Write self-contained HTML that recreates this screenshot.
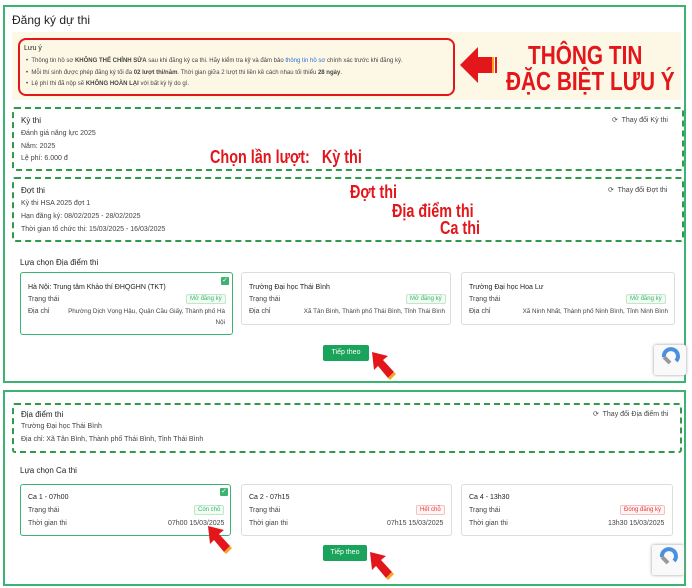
<!DOCTYPE html>
<html><head><meta charset="utf-8"><style>
*{box-sizing:border-box;margin:0;padding:0}
body{width:692px;height:588px;background:#fff;font-family:"Liberation Sans",sans-serif;position:relative;overflow:hidden;color:#333}
.a{position:absolute}
.panel{position:absolute;border:2px solid #3cb371;background:#fff}
.dash{position:absolute;border:2px dashed #2e9a4a;border-radius:3px}
.s{font-size:7px;color:#444;position:absolute;white-space:nowrap}
.h{font-size:8px;color:#222;position:absolute;white-space:nowrap}
.red{position:absolute;color:#e3161b;font-weight:bold;white-space:nowrap;transform-origin:0 0}
.card{position:absolute;border:1px solid #ddd;border-radius:3px;background:#fff}
.card.sel{border:1.5px solid #3cb371}
.badge{position:absolute;font-size:6px;border:1px solid;border-radius:2px;padding:1px 3px;white-space:nowrap}
.g{color:#3cb371;border-color:#bfe8c9;background:#f3fbf4}
.r{color:#e33;border-color:#f5c0c0;background:#fff5f5}
.btn{position:absolute;background:#1aa35a;color:#fff;font-size:7px;border-radius:2px;text-align:center}
.chk{position:absolute;width:8px;height:8px;background:#3cb371;border-radius:1px;color:#fff;font-size:7px;line-height:8px;text-align:center}
.cap{position:absolute;width:32px;height:30px;background:#f9f9f9;box-shadow:0 0 3px #999;border-radius:2px}
.addr{position:absolute;font-size:6.3px;color:#444;text-align:right;line-height:11px}
</style></head><body>

<div class="panel" style="left:3px;top:5px;width:683px;height:378px"></div>
<div class="a" style="left:12px;top:13px;font-size:12px;color:#222">Đăng ký dự thi</div>
<div class="a" style="left:12px;top:32px;width:669px;height:68px;background:#fdf8e6"></div>
<div class="a" style="left:18px;top:38px;width:437px;height:58px;border:2px solid #e3161b;border-radius:8px"></div>
<div class="h" style="left:24px;top:45px;font-size:7px">Lưu ý</div>
<div class="s" style="left:26px;top:58px;font-size:6px">•&nbsp; Thông tin hồ sơ <b>KHÔNG THỂ CHỈNH SỬA</b> sau khi đăng ký ca thi. Hãy kiểm tra kỹ và đảm bảo <span style="color:#2a6fd6">thông tin hồ sơ</span> chính xác trước khi đăng ký.</div>
<div class="s" style="left:26px;top:70px;font-size:6px">•&nbsp; Mỗi thí sinh được phép đăng ký tối đa <b>02 lượt thi/năm</b>. Thời gian giữa 2 lượt thi liền kề cách nhau tối thiểu <b>28 ngày</b>.</div>
<div class="s" style="left:26px;top:81px;font-size:6px">•&nbsp; Lệ phí thi đã nộp sẽ <b>KHÔNG HOÀN LẠI</b> với bất kỳ lý do gì.</div>
<svg class="a" style="left:458px;top:44px" width="40" height="42" viewBox="0 0 40 42"><path d="M2 21 L20 3 L20 13 L34 13 L34 29 L20 29 L20 39 Z" fill="#e3161b"/><rect x="34" y="13" width="2" height="16" fill="#f5a623"/><rect x="37" y="13" width="2" height="16" fill="#e3161b"/></svg>
<div class="red" style="left:528px;top:40px;font-size:26px;transform:scaleX(0.8)">THÔNG TIN</div>
<div class="red" style="left:506px;top:66px;font-size:26px;transform:scaleX(0.8)">ĐẶC BIỆT LƯU Ý</div>

<div class="dash" style="left:12px;top:107px;width:672px;height:64px"></div>
<div class="h" style="left:21px;top:116px">Kỳ thi</div>
<div class="s" style="left:21px;top:130px">Đánh giá năng lực 2025</div>
<div class="s" style="left:21px;top:143px">Năm: 2025</div>
<div class="s" style="left:21px;top:155px">Lệ phí: 6.000 đ</div>
<div class="s" style="left:612px;top:116px">⟳&nbsp; Thay đổi Kỳ thi</div>
<div class="red" style="left:210px;top:147px;font-size:18px;transform:scaleX(0.8)">Chọn lần lượt:&nbsp;&nbsp; Kỳ thi</div>

<div class="dash" style="left:12px;top:177px;width:672px;height:65px"></div>
<div class="h" style="left:21px;top:186px">Đợt thi</div>
<div class="s" style="left:21px;top:200px">Kỳ thi HSA 2025 đợt 1</div>
<div class="s" style="left:21px;top:213px">Hạn đăng ký: 08/02/2025 - 28/02/2025</div>
<div class="s" style="left:21px;top:226px">Thời gian tổ chức thi: 15/03/2025 - 16/03/2025</div>
<div class="s" style="left:608px;top:186px">⟳&nbsp; Thay đổi Đợt thi</div>
<div class="red" style="left:350px;top:182px;font-size:18px;transform:scaleX(0.8)">Đợt thi</div>
<div class="red" style="left:392px;top:201px;font-size:18px;transform:scaleX(0.8)">Địa điểm thi</div>
<div class="red" style="left:440px;top:218px;font-size:18px;transform:scaleX(0.8)">Ca thi</div>

<div class="h" style="left:20px;top:258px">Lựa chọn Địa điểm thi</div>
<div class="card sel" style="left:20px;top:272px;width:213px;height:63px"></div>
<div class="chk" style="left:221px;top:277px">✓</div>
<div class="h" style="left:28px;top:284px;font-size:7px">Hà Nội: Trung tâm Khảo thí ĐHQGHN (TKT)</div>
<div class="s" style="left:28px;top:296px">Trạng thái</div><div class="badge g" style="left:186px;top:294px">Mở đăng ký</div>
<div class="s" style="left:28px;top:308px">Địa chỉ</div><div class="addr" style="left:60px;top:306px;width:165px">Phường Dịch Vọng Hậu, Quận Cầu Giấy, Thành phố Hà Nội</div>

<div class="card" style="left:241px;top:272px;width:210px;height:53px"></div>
<div class="h" style="left:249px;top:284px;font-size:7px">Trường Đại học Thái Bình</div>
<div class="s" style="left:249px;top:296px">Trạng thái</div><div class="badge g" style="left:406px;top:294px">Mở đăng ký</div>
<div class="s" style="left:249px;top:308px">Địa chỉ</div><div class="addr" style="left:280px;top:306px;width:165px">Xã Tân Bình, Thành phố Thái Bình, Tỉnh Thái Bình</div>

<div class="card" style="left:461px;top:272px;width:214px;height:53px"></div>
<div class="h" style="left:469px;top:284px;font-size:7px">Trường Đại học Hoa Lư</div>
<div class="s" style="left:469px;top:296px">Trạng thái</div><div class="badge g" style="left:626px;top:294px">Mở đăng ký</div>
<div class="s" style="left:469px;top:308px">Địa chỉ</div><div class="addr" style="left:500px;top:306px;width:168px">Xã Ninh Nhất, Thành phố Ninh Bình, Tỉnh Ninh Bình</div>

<div class="btn" style="left:323px;top:345px;width:46px;height:16px;line-height:16px">Tiếp theo</div>
<svg class="a" style="left:370px;top:350px" width="28" height="30" viewBox="0 0 28 30"><path d="M2 2 L18 6 L13 10 L24 22 L18 28 L8 16 L4 20 Z" fill="#e3161b"/><path d="M24 22 L26 24 L20 30 L18 28 Z" fill="#f5a623"/></svg>
<div class="cap" style="left:654px;top:345px"><svg width="32" height="22" viewBox="0 0 32 22"><path d="M10 12 A7 7 0 1 1 22 16" stroke="#4a90e2" stroke-width="4" fill="none"/><path d="M10 12 L16 18" stroke="#999" stroke-width="4"/></svg></div>

<div class="panel" style="left:3px;top:390px;width:683px;height:196px"></div>
<div class="dash" style="left:12px;top:403px;width:670px;height:50px"></div>
<div class="h" style="left:21px;top:410px">Địa điểm thi</div>
<div class="s" style="left:21px;top:423px">Trường Đại học Thái Bình</div>
<div class="s" style="left:21px;top:436px">Địa chỉ: Xã Tân Bình, Thành phố Thái Bình, Tỉnh Thái Bình</div>
<div class="s" style="left:593px;top:410px">⟳&nbsp; Thay đổi Địa điểm thi</div>

<div class="h" style="left:20px;top:466px">Lựa chọn Ca thi</div>
<div class="card sel" style="left:20px;top:484px;width:211px;height:52px"></div>
<div class="chk" style="left:220px;top:488px">✓</div>
<div class="h" style="left:28px;top:494px;font-size:7px">Ca 1 - 07h00</div>
<div class="s" style="left:28px;top:507px">Trạng thái</div><div class="badge g" style="left:194px;top:505px">Còn chỗ</div>
<div class="s" style="left:28px;top:520px">Thời gian thi</div><div class="s" style="left:168px;top:520px">07h00 15/03/2025</div>

<div class="card" style="left:241px;top:484px;width:211px;height:52px"></div>
<div class="h" style="left:249px;top:494px;font-size:7px">Ca 2 - 07h15</div>
<div class="s" style="left:249px;top:507px">Trạng thái</div><div class="badge r" style="left:416px;top:505px">Hết chỗ</div>
<div class="s" style="left:249px;top:520px">Thời gian thi</div><div class="s" style="left:387px;top:520px">07h15 15/03/2025</div>

<div class="card" style="left:461px;top:484px;width:212px;height:52px"></div>
<div class="h" style="left:469px;top:494px;font-size:7px">Ca 4 - 13h30</div>
<div class="s" style="left:469px;top:507px">Trạng thái</div><div class="badge r" style="left:620px;top:505px">Đóng đăng ký</div>
<div class="s" style="left:469px;top:520px">Thời gian thi</div><div class="s" style="left:608px;top:520px">13h30 15/03/2025</div>

<svg class="a" style="left:206px;top:524px" width="28" height="30" viewBox="0 0 28 30"><path d="M2 2 L18 6 L13 10 L24 22 L18 28 L8 16 L4 20 Z" fill="#e3161b"/><path d="M24 22 L26 24 L20 30 L18 28 Z" fill="#f5a623"/></svg>
<div class="btn" style="left:323px;top:545px;width:44px;height:16px;line-height:16px">Tiếp theo</div>
<svg class="a" style="left:368px;top:550px" width="28" height="30" viewBox="0 0 28 30"><path d="M2 2 L18 6 L13 10 L24 22 L18 28 L8 16 L4 20 Z" fill="#e3161b"/><path d="M24 22 L26 24 L20 30 L18 28 Z" fill="#f5a623"/></svg>
<div class="cap" style="left:652px;top:545px"><svg width="32" height="22" viewBox="0 0 32 22"><path d="M10 12 A7 7 0 1 1 22 16" stroke="#4a90e2" stroke-width="4" fill="none"/><path d="M10 12 L16 18" stroke="#999" stroke-width="4"/></svg></div>
</body></html>
